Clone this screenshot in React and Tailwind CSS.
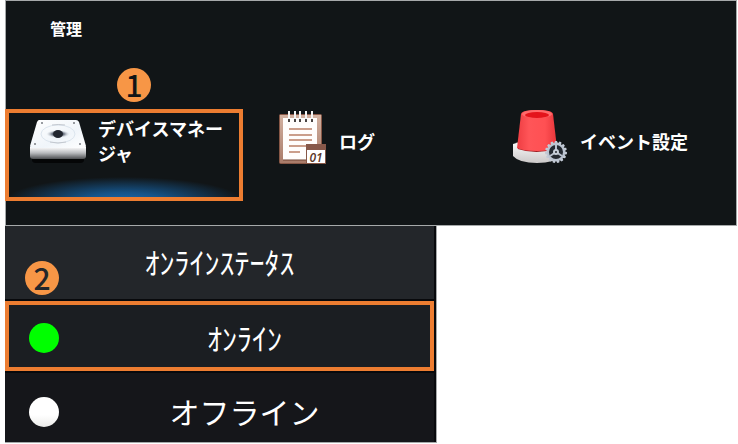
import React from "react";

function DriveIcon() {
  return (
    <svg viewBox="0 -8 56 54" className="h-[54px] w-14" aria-hidden="true">
      <defs>
        <linearGradient id="driveTop" x1="0" y1="0" x2="1" y2="1">
          <stop offset="0" stopColor="#ffffff" />
          <stop offset="0.6" stopColor="#f0f5fa" />
          <stop offset="1" stopColor="#ffffff" />
        </linearGradient>
        <linearGradient id="driveSide" x1="0" y1="0" x2="0" y2="1">
          <stop offset="0" stopColor="#ffffff" />
          <stop offset="0.5" stopColor="#b8babd" />
          <stop offset="1" stopColor="#4c4e51" />
        </linearGradient>
        <radialGradient id="driveHub">
          <stop offset="0" stopColor="#2b2f38" />
          <stop offset="0.5" stopColor="#6f7785" />
          <stop offset="1" stopColor="#e9eef4" stopOpacity="0" />
        </radialGradient>
      </defs>
      <path d="M2 38h52v3q0 3-4 3H6q-4 0-4-3z" fill="#050607" />
      <path d="M0 28h56v9q0 3-3 3H3q-3 0-3-3z" fill="url(#driveSide)" />
      <path d="M9 1h37q2 0 3 2l7 24q0 2-2 2H2q-2 0-2-2L7 3q1-2 2-2z" fill="url(#driveTop)" />
      <ellipse cx="28" cy="15" rx="17" ry="9" fill="none" stroke="#dce5ee" />
      <path d="M22 6q6-1 13 0M20 23q8 2 16 0" fill="none" stroke="#c3c8cf" />
      <ellipse cx="28" cy="15" rx="12" ry="4" fill="url(#driveHub)" />
      <ellipse cx="28" cy="15" rx="5" ry="4" fill="#22262f" />
      <g fill="#777b82">
        <circle cx="12" cy="4" r="1" />
        <circle cx="44" cy="4" r="1" />
        <circle cx="5" cy="25" r="1" />
        <circle cx="50" cy="25" r="1" />
      </g>
    </svg>
  );
}

function LogIcon() {
  return (
    <svg viewBox="0 0 48 54" className="h-[54px] w-12" aria-hidden="true">
      <defs>
        <linearGradient id="logBoard" x1="0" y1="0" x2="0" y2="1">
          <stop offset="0" stopColor="#d3b2a2" />
          <stop offset="1" stopColor="#a87a68" />
        </linearGradient>
      </defs>
      <rect x="0.5" y="3.5" width="42" height="49" rx="1" fill="url(#logBoard)" stroke="#875746" />
      <path d="M4 7h34v42H4z" fill="#fffdfc" />
      <path d="M4 49h24" stroke="#704434" />
      <path d="M10 18h23M10 24h23M10 29h23M10 35h18M10 41h11" stroke="#cb9e8b" strokeWidth="2" />
      <path d="M10 0v9M16 0v9M21 0v9M27 0v9M33 0v9" stroke="#f4f4f4" strokeWidth="2" />
      <path d="M10 8v3M16 8v3M21 8v3M27 8v3M33 8v3" stroke="#4a4543" strokeWidth="2" />
      <rect x="27.5" y="33.5" width="19" height="19" fill="#fff" stroke="#875746" />
      <path d="M27 33h20v6H27z" fill="#87584a" />
      <text x="37" y="51" textAnchor="middle" fontFamily="Open Sans, sans-serif" fontSize="12" fontWeight="600" fontStyle="italic" fill="#593426">01</text>
    </svg>
  );
}

function AlarmIcon() {
  const teeth = [0, 24, 48, 72, 96, 120, 144, 168, 192, 216, 240, 264, 288, 312, 336];
  return (
    <svg viewBox="0 0 56 56" className="h-14 w-14" aria-hidden="true">
      <defs>
        <linearGradient id="lamp" x1="0" y1="0" x2="1" y2="0">
          <stop offset="0" stopColor="#ee3d42" />
          <stop offset="0.3" stopColor="#ff5558" />
          <stop offset="0.7" stopColor="#ff5053" />
          <stop offset="1" stopColor="#e8353a" />
        </linearGradient>
        <linearGradient id="lampBase" x1="0" y1="0" x2="0" y2="1">
          <stop offset="0" stopColor="#ffffff" />
          <stop offset="1" stopColor="#cbc8c8" />
        </linearGradient>
      </defs>
      <path d="M1 34q24-8 48 0v12q-6 7-24 7T1 46z" fill="url(#lampBase)" />
      <path d="M6 38q18 6 38 0" fill="none" stroke="#a01d22" strokeWidth="2" />
      <path d="M9 4Q10 0 25 0t16 4l4 34q-6 3-20 3T5 38z" fill="url(#lamp)" />
      <ellipse cx="25" cy="4" rx="15" ry="4" fill="#ff6a6b" />
      <ellipse cx="25" cy="5" rx="12" ry="3" fill="#e4141b" />
      <g transform="translate(44 42)">
        {teeth.map((a) => (
          <path key={a} d="M-1-11h2l1 3h-4z" fill="#c3cad6" transform={`rotate(${a})`} />
        ))}
        <circle r="8" fill="#252a32" stroke="#bcc5d2" strokeWidth="2" />
        <path d="M0 0V-7M0 0l-6 4M0 0l6 4" stroke="#b8c1ce" strokeWidth="2" />
        <circle r="2" fill="#252a32" stroke="#c8d0db" strokeWidth="2" />
      </g>
    </svg>
  );
}

const menu = [
  { label: "デバイスマネージャ", Icon: DriveIcon, selected: true },
  { label: "ログ", Icon: LogIcon },
  { label: "イベント設定", Icon: AlarmIcon },
];

function MenuItem({ label, Icon, selected }) {
  return (
    <button
      type="button"
      className={
        "flex h-[92px] items-start pr-1 pl-[25px] text-left " +
        (selected
          ? "bg-[radial-gradient(ellipse_50%_24px_at_50%_100%,#1868ac_0%,#155388_35%,#111517_100%)] shadow-[inset_0_0_0_4px_#ed7d31]"
          : "")
      }
    >
      <span className="flex h-[58px] w-14 shrink-0 items-center justify-end">
        <Icon />
      </span>
      <span className="flex h-16 items-center pl-3 text-lg leading-[25px] font-bold">{label}</span>
    </button>
  );
}

function StepBadge({ children, className }) {
  return (
    <span className={"absolute flex size-[34px] items-center justify-center rounded-full bg-[#f79646] pb-0.5 text-[30px] leading-8 font-medium " + className}>
      {children}
    </span>
  );
}

export default function App() {
  return (
    <main className="bg-white pr-px pl-[5px] font-['Noto_Sans_CJK_JP',sans-serif] text-white">
      <section className="relative bg-[#111517] pt-4 pb-[25px] shadow-[inset_0_0_0_1px_#a6a9aa]">
        <h1 className="pl-[45px] text-base leading-6 font-bold">管理</h1>
        <nav className="mt-[69px] grid grid-cols-3 gap-[3px] pr-3">
          {menu.map((item) => (
            <MenuItem key={item.label} {...item} />
          ))}
        </nav>
        <StepBadge className="top-[68px] left-28 text-[#111517]">1</StepBadge>
      </section>
      <section className="relative w-[59%] border-r border-b border-[#a6a9aa] bg-[#08090c] pr-0.5">
        <table className="w-full border-collapse text-[30px] leading-10">
          <thead>
            <tr className="h-[74px] border-b-2 border-[#08090c] bg-[#23262a]">
              <th scope="col" className="p-0 pb-1 text-center font-normal">ｵﾝﾗｲﾝｽﾃｰﾀｽ</th>
            </tr>
          </thead>
          <tbody>
            <tr className="h-[72px] border-b-2 border-[#08090c]">
              <td className="h-[70px] p-0">
                <div className="flex h-[70px] items-center border-4 border-[#ed7d31] bg-[#1b1e22] pt-1 pl-5">
                  <span className="size-[30px] rounded-full bg-[#00ff00]" />
                  <span className="flex-1 pb-0.5 text-center">ｵﾝﾗｲﾝ</span>
                </div>
              </td>
            </tr>
            <tr className="h-[69px] bg-[#15161a]">
              <td className="p-0">
                <div className="flex h-[69px] items-center pt-2 pl-6">
                  <span className="size-[30px] rounded-full bg-linear-to-b from-white from-60% to-[#ececea]" />
                  <span className="flex-1 pr-1 pb-0.5 text-center">オフライン</span>
                </div>
              </td>
            </tr>
          </tbody>
        </table>
        <StepBadge className="top-[35px] left-5 text-[#23262a]">2</StepBadge>
      </section>
    </main>
  );
}
